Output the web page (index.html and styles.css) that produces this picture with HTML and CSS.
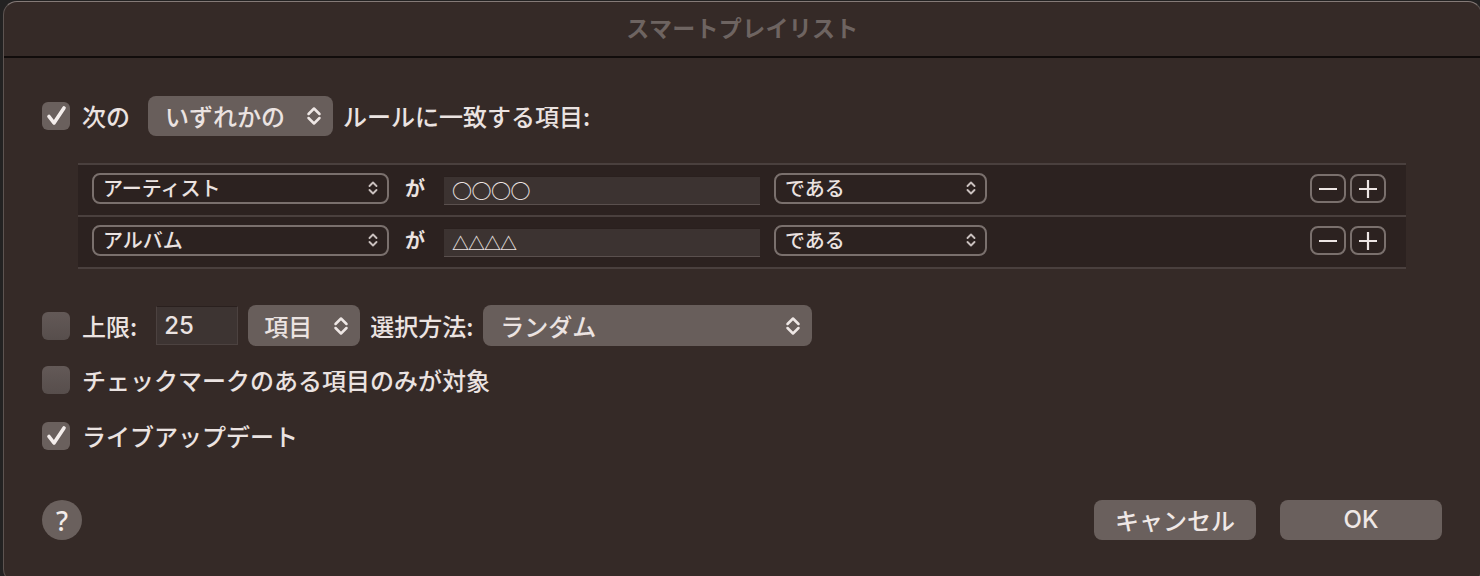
FILE: index.html
```html
<!DOCTYPE html>
<html lang="ja">
<head>
<meta charset="utf-8">
<title>スマートプレイリスト</title>
<link rel="stylesheet" href="styles.css">
</head>
<body>
<div class="window">
  <div class="titlebar">スマートプレイリスト</div>
  <div class="content">
    <div class="row row-match">
      <span class="checkbox checked">
        <svg viewBox="0 0 28 28" width="28" height="28"><path d="M7 14.5 L12 21 L22 6" fill="none" stroke="#f4eeec" stroke-width="3.6" stroke-linecap="round" stroke-linejoin="round"/></svg>
      </span>
      <span class="label">次の</span>
      <span class="popup popup-any">
        <span class="popup-text">いずれかの</span>
        <svg class="chev" viewBox="0 0 16 22" width="16" height="22"><path d="M2.5 9 L8 3.5 L13.5 9 M2.5 13 L8 18.5 L13.5 13" fill="none" stroke="#eee7e5" stroke-width="2.5" stroke-linecap="round" stroke-linejoin="round"/></svg>
      </span>
      <span class="label">ルールに一致する項目:</span>
    </div>

    <div class="rules">
      <div class="rule">
        <span class="rpopup rp-field">
          <span>アーティスト</span>
          <svg class="rchev" viewBox="0 0 10 16" width="10" height="16"><path d="M1.5 6 L5 2.5 L8.5 6 M1.5 10 L5 13.5 L8.5 10" fill="none" stroke="#c9c0be" stroke-width="1.9" stroke-linecap="round" stroke-linejoin="round"/></svg>
        </span>
        <span class="ga">が</span>
        <span class="field">○○○○</span>
        <span class="rpopup rp-op">
          <span>である</span>
          <svg class="rchev" viewBox="0 0 10 16" width="10" height="16"><path d="M1.5 6 L5 2.5 L8.5 6 M1.5 10 L5 13.5 L8.5 10" fill="none" stroke="#c9c0be" stroke-width="1.9" stroke-linecap="round" stroke-linejoin="round"/></svg>
        </span>
        <span class="spacer"></span>
        <span class="pm"><svg viewBox="0 0 18 18" width="18" height="18"><path d="M0 9 H18" stroke="#ede6e4" stroke-width="2.2"/></svg></span>
        <span class="pm"><svg viewBox="0 0 18 18" width="18" height="18"><path d="M0 9 H18 M9 0 V18" stroke="#ede6e4" stroke-width="2.2"/></svg></span>
      </div>
      <div class="rule">
        <span class="rpopup rp-field">
          <span>アルバム</span>
          <svg class="rchev" viewBox="0 0 10 16" width="10" height="16"><path d="M1.5 6 L5 2.5 L8.5 6 M1.5 10 L5 13.5 L8.5 10" fill="none" stroke="#c9c0be" stroke-width="1.9" stroke-linecap="round" stroke-linejoin="round"/></svg>
        </span>
        <span class="ga">が</span>
        <span class="field field-tri">△△△△</span>
        <span class="rpopup rp-op">
          <span>である</span>
          <svg class="rchev" viewBox="0 0 10 16" width="10" height="16"><path d="M1.5 6 L5 2.5 L8.5 6 M1.5 10 L5 13.5 L8.5 10" fill="none" stroke="#c9c0be" stroke-width="1.9" stroke-linecap="round" stroke-linejoin="round"/></svg>
        </span>
        <span class="spacer"></span>
        <span class="pm"><svg viewBox="0 0 18 18" width="18" height="18"><path d="M0 9 H18" stroke="#ede6e4" stroke-width="2.2"/></svg></span>
        <span class="pm"><svg viewBox="0 0 18 18" width="18" height="18"><path d="M0 9 H18 M9 0 V18" stroke="#ede6e4" stroke-width="2.2"/></svg></span>
      </div>
    </div>

    <div class="row row-limit">
      <span class="checkbox"></span>
      <span class="label">上限:</span>
      <span class="numfield">25</span>
      <span class="popup popup-unit">
        <span class="popup-text">項目</span>
        <svg class="chev" viewBox="0 0 16 22" width="16" height="22"><path d="M2.5 9 L8 3.5 L13.5 9 M2.5 13 L8 18.5 L13.5 13" fill="none" stroke="#eee7e5" stroke-width="2.5" stroke-linecap="round" stroke-linejoin="round"/></svg>
      </span>
      <span class="label label-method">選択方法:</span>
      <span class="popup popup-random">
        <span class="popup-text">ランダム</span>
        <svg class="chev" viewBox="0 0 16 22" width="16" height="22"><path d="M2.5 9 L8 3.5 L13.5 9 M2.5 13 L8 18.5 L13.5 13" fill="none" stroke="#eee7e5" stroke-width="2.5" stroke-linecap="round" stroke-linejoin="round"/></svg>
      </span>
    </div>

    <div class="row row-check">
      <span class="checkbox"></span>
      <span class="label">チェックマークのある項目のみが対象</span>
    </div>

    <div class="row row-live">
      <span class="checkbox checked">
        <svg viewBox="0 0 28 28" width="28" height="28"><path d="M7 14.5 L12 21 L22 6" fill="none" stroke="#f4eeec" stroke-width="3.6" stroke-linecap="round" stroke-linejoin="round"/></svg>
      </span>
      <span class="label">ライブアップデート</span>
    </div>

    <div class="row row-buttons">
      <span class="help">?</span>
      <span class="spacer"></span>
      <span class="btn">キャンセル</span>
      <span class="btn btn-ok">OK</span>
    </div>
  </div>
</div>
</body>
</html>
```

FILE: styles.css
```css
html, body {
  margin: 0;
  padding: 0;
}
body {
  background: #232222;
  width: 1480px;
  height: 576px;
  overflow: hidden;
  font-family: "Inter", "Noto Sans CJK JP", sans-serif;
  color: #ebe3e1;
}
.window {
  box-sizing: border-box;
  margin: 1px 0 0 3px;
  width: 1479px;
  height: 582px;
  background: #352a27;
  border: 1px solid #5d5451;
  border-top-color: #847a77;
  border-radius: 14px;
  display: flex;
  flex-direction: column;
  overflow: hidden;
}
.titlebar {
  flex: none;
  border-bottom: 2px solid #110c0b;
  display: flex;
  align-items: center;
  justify-content: center;
  padding-bottom: 4px;
  box-sizing: border-box;
  height: 56px;
  font-family: "Noto Sans CJK JP", sans-serif;
  font-weight: 700;
  font-size: 23px;
  color: #6e6461;
  letter-spacing: 0.3px;
}
.content {
  padding: 0 36px 0 38px;
  display: flex;
  flex-direction: column;
}
.row {
  display: flex;
  align-items: center;
}
.label {
  font-size: 24px;
  font-family: "Noto Sans CJK JP", sans-serif;
  font-weight: 500;
  line-height: 1;
  white-space: nowrap;
}
.checkbox {
  box-sizing: border-box;
  width: 28px;
  height: 28px;
  border-radius: 6px;
  background: linear-gradient(#635957, #574e4c);
  flex: none;
  margin-right: 12px;
  display: flex;
}
.checkbox.checked {
  background: #6a605d;
}
.chev, .rchev {
  flex: none;
  display: block;
}
.row-match {
  margin-top: 38px;
  height: 40px;
}
.popup {
  box-sizing: border-box;
  height: 40px;
  background: #685e5b;
  border-radius: 8px;
  display: flex;
  align-items: center;
  justify-content: space-between;
  padding: 0 11px 0 18px;
  font-size: 24px;
  font-family: "Noto Sans CJK JP", sans-serif;
  font-weight: 500;
  flex: none;
}
.popup-text {
  line-height: 1;
}
.popup-any {
  width: 185px;
  margin-left: 18px;
  margin-right: 10px;
  padding-left: 17px;
}
.rules {
  margin-top: 27px;
  margin-left: 36px;
  width: 1328px;
  border-bottom: 2px solid #4a403e;
}
.rule {
  box-sizing: border-box;
  height: 52px;
  border-top: 2px solid #4a403e;
  background: #2c2220;
  display: flex;
  align-items: center;
  padding: 0 20px 4px 14px;
}
.rpopup {
  box-sizing: border-box;
  height: 31px;
  border: 2px solid #7a706d;
  border-radius: 8px;
  display: flex;
  align-items: center;
  justify-content: space-between;
  padding: 0 9px 0 9px;
  font-size: 20px;
  font-family: "Noto Sans CJK JP", sans-serif;
  font-weight: 500;
  line-height: 1;
  flex: none;
}
.rp-field {
  width: 297px;
}
.rp-op {
  width: 213px;
}
.ga {
  font-family: "Noto Sans CJK JP", sans-serif;
  font-size: 20px;
  font-weight: 700;
  margin: 0 19px 0 16px;
  line-height: 1;
}
.field {
  box-sizing: border-box;
  width: 316px;
  height: 29px;
  margin-top: 5px;
  margin-right: 14px;
  background: #3c3331;
  border-bottom: 1px solid #5a504e;
  border-top: 1px solid #2a201e;
  display: flex;
  align-items: center;
  padding-left: 8px;
  font-family: "Noto Sans CJK JP", sans-serif;
  font-size: 20px;
  font-weight: 700;
  letter-spacing: -0.5px;
  line-height: 1;
}
.field-tri {
  font-size: 17px;
  letter-spacing: -1px;
}
.spacer {
  flex: 1;
}
.pm {
  box-sizing: border-box;
  width: 36px;
  height: 29px;
  border: 2px solid #7a706d;
  border-radius: 8px;
  display: flex;
  align-items: center;
  justify-content: center;
  margin-top: 1px;
}
.pm + .pm {
  margin-left: 4px;
}
.row-limit {
  margin-top: 36px;
  height: 41px;
}
.numfield {
  box-sizing: border-box;
  width: 82px;
  height: 39px;
  margin-left: 19px;
  background: #3d3432;
  border: 1px solid #4c4240;
  border-top-color: #2a201e;
  display: flex;
  align-items: center;
  padding-left: 7px;
  font-size: 24px;
  font-family: "Inter", sans-serif;
  font-weight: 500;
  line-height: 1;
}
.popup-unit {
  width: 112px;
  height: 41px;
  margin-left: 10px;
  margin-right: 10px;
  padding-left: 16px;
}
.label-method {
  margin-right: 10px;
}
.popup-random {
  width: 329px;
  height: 41px;
  padding-left: 17px;
}
.row-check {
  margin-top: 20px;
  height: 28px;
}
.row-live {
  margin-top: 28px;
  height: 28px;
}
.row-buttons {
  margin-top: 50px;
  height: 40px;
  padding-right: 3px;
}
.help {
  box-sizing: border-box;
  width: 40px;
  height: 40px;
  border-radius: 50%;
  background: #6a605d;
  display: flex;
  align-items: center;
  justify-content: center;
  font-family: "Noto Sans", sans-serif;
  font-size: 27px;
  font-weight: 500;
  color: #f3ecea;
  line-height: 1;
}
.btn {
  box-sizing: border-box;
  width: 162px;
  height: 40px;
  border-radius: 8px;
  background: #6a605d;
  display: flex;
  align-items: center;
  justify-content: center;
  font-family: "Noto Sans CJK JP", sans-serif;
  font-size: 24px;
  font-weight: 500;
  line-height: 1;
  color: #efe8e6;
}
.btn-ok {
  margin-left: 24px;
  font-family: "Inter", sans-serif;
  font-weight: 500;
}
```
